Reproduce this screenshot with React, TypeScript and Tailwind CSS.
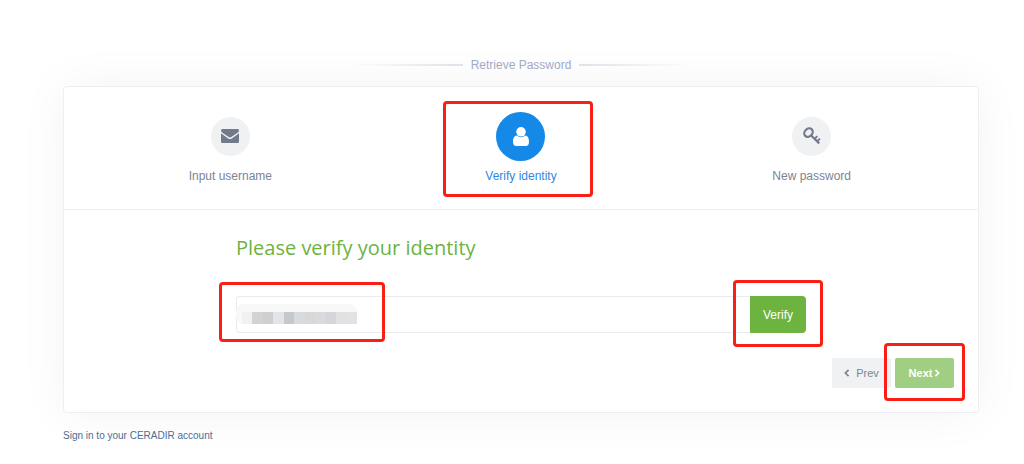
import type { ReactNode } from "react";

function EnvelopeIcon() {
  return (
    <svg viewBox="0 0 18 14" className="h-3.5 w-[18px]" fill="currentColor" aria-hidden="true">
      <path d="M1.4 0h15.2C17.4 0 18 .6 18 1.4c0 .9-.7 1.8-1.4 2.3L10.7 7.8C10.2 8.2 9.6 8.6 9 8.6s-1.2-.4-1.7-.8L1.4 3.7C.8 3.2 0 2.3 0 1.5 0 .7.6 0 1.4 0Z" />
      <path d="M0 4.2c.3.3.6.6 1 .8l5.500 3.900c.8.6 1.6 1.2 2.500 1.200s1.700-.6 2.500-1.200L17 5c.4-.2.7-.5 1-.8v8.200c0 .9-.7 1.600-1.600 1.600H1.600C.7 14 0 13.300 0 12.400Z" />
    </svg>
  );
}

function UserIcon() {
  return (
    <svg viewBox="0 0 16 19" className="h-[19px] w-4" fill="currentColor" aria-hidden="true">
      <circle cx="8" cy="4.8" r="4.8" />
      <path d="M3.9 8.600A5.700 5.700 0 0 0 8 10.300a5.700 5.700 0 0 0 4.100-1.700C15 8.700 16 11.600 16 15.300c0 2.200-1.200 3.700-3.200 3.700H3.200C1.200 19 0 17.500 0 15.300 0 11.600 1 8.700 3.900 8.600Z" />
    </svg>
  );
}

function KeyIcon() {
  return (
    <svg viewBox="0 0 18 18" className="size-[18px]" fill="none" stroke="currentColor" strokeWidth="2.2" aria-hidden="true">
      <ellipse cx="5.5" cy="5.6" rx="4.6" ry="3.8" transform="rotate(-45 5.5 5.6)" />
      <path d="m8 8.2 8.2 8.2" />
      <path d="m11.6 11.8 2.7-2.7M14.2 14.4l2.7-2.7" strokeWidth="1.9" />
    </svg>
  );
}

function Chevron({ left = false }: { left?: boolean }) {
  return (
    <svg viewBox="0 0 6 8" className="h-2 w-1.5" fill="none" stroke="currentColor" strokeWidth="1.7" aria-hidden="true">
      <path d={left ? "M4.6 .8 1.4 4l3.2 3.2" : "M1.4 .8 4.6 4 1.4 7.2"} />
    </svg>
  );
}

const frame = "pointer-events-none absolute rounded-sm border-3 border-[#fa1f14]";

function Step({ icon, label, active = false }: { icon: ReactNode; label: string; active?: boolean }) {
  return (
    <li
      className={`flex flex-col items-center ${active ? "text-[#2f87e0]" : "text-[#7b8494]"}`}
      aria-current={active ? "step" : undefined}
    >
      <div className="relative flex flex-col items-center">
        <div className="flex h-[50px] items-center">
          <span
            className={`flex items-center justify-center rounded-full ${
              active ? "size-[49px] bg-[#1589e8] text-white" : "size-[39px] bg-[#f0f1f3] text-[#717b8c]"
            }`}
          >
            {icon}
          </span>
        </div>
        <span className="mt-1 text-xs leading-[22px]">{label}</span>
        {active && <div className={`${frame} -top-2.5 -right-9 -bottom-2.5 -left-[42px]`} />}
      </div>
    </li>
  );
}

const mosaic = [
  "bg-[#f1f1f1]",
  "bg-[#d3d3d4]",
  "bg-[#cfcfd0]",
  "bg-[#e3e4e6]",
  "bg-[#c5c9cd]",
  "bg-[#d9dadb]",
  "bg-[#d7d8da]",
  "bg-[#dadadc]",
  "bg-[#d6d5dc]",
  "bg-[#e0e1e2]",
  "bg-[#e1e2e3]",
];

export default function App() {
  return (
    <main className="bg-white pt-[55px] pr-[45px] pl-[63px] font-['Liberation_Sans',Arial,sans-serif]">
      <header className="flex items-center justify-center gap-2">
        <span className="h-0.5 w-28 bg-linear-to-r from-transparent to-[#dde3ea]" />
        <h1 className="text-xs leading-5 text-[#a3a9c4]">Retrieve Password</h1>
        <span className="h-0.5 w-28 bg-linear-to-l from-transparent to-[#dde3ea]" />
      </header>

      <section className="mt-[11px] rounded-sm border border-[#eceef3] bg-white shadow-[0_0_50px_rgba(0,0,0,0.05)]">
        <ol className="grid grid-cols-3 border-b border-[#eeeff2] px-[21px] pt-6 pb-[22px]">
          <Step icon={<EnvelopeIcon />} label="Input username" />
          <Step icon={<UserIcon />} label="Verify identity" active />
          <Step icon={<KeyIcon />} label="New password" />
        </ol>

        <form className="px-6 pt-[22px] pb-6" onSubmit={(e) => e.preventDefault()}>
          <div className="mx-auto max-w-[570px]">
            <h2 className="font-['Open_Sans','Noto_Sans',sans-serif] text-xl leading-8 text-[#6cb33f]">
              <label htmlFor="identity">Please verify your identity</label>
            </h2>
            <div className="relative mt-8 flex h-[37px]">
              <input
                id="identity"
                type="text"
                className="min-w-0 flex-1 rounded-l-sm border border-r-0 border-[#e9eaf2] bg-white px-3 text-xs outline-none"
              />
              <div className="pointer-events-none absolute top-2 left-0 h-5 w-[121px] rounded-lg bg-[#f8f8f8] pt-2 pl-1.5">
                <div className="flex h-3 w-[115px]">
                  {mosaic.map((tone) => (
                    <span key={tone} className={`flex-1 ${tone}`} />
                  ))}
                </div>
              </div>
              <div className={`${frame} -top-3.5 -left-[17px] h-[60px] w-[166px]`} />
              <div className="relative flex">
                <button type="button" className="w-14 rounded-r-sm bg-[#6cb33f] text-xs text-white">
                  Verify
                </button>
                <div className={`${frame} -inset-x-[17px] -top-4 -bottom-3.5`} />
              </div>
            </div>
          </div>

          <div className="mt-[25px] flex justify-end gap-1 text-[11px]">
            <button
              type="button"
              className="flex h-[30px] w-[59px] items-center justify-center gap-1.5 rounded-xs bg-[#f0f1f3] text-[#7b8494]"
            >
              <Chevron left />
              Prev
            </button>
            <div className="relative">
              <button
                type="submit"
                className="flex h-[30px] w-[59px] items-center justify-center gap-0.5 rounded-xs bg-[#a0ce82] font-bold text-white"
              >
                Next
                <Chevron />
              </button>
              <div className={`${frame} -inset-x-[11px] -top-[15px] -bottom-[13px]`} />
            </div>
          </div>
        </form>
      </section>

      <a href="#signin" className="mt-[15px] inline-block text-[10px] leading-4 text-[#4a6f96]">
        Sign in to your CERADIR account
      </a>
    </main>
  );
}
